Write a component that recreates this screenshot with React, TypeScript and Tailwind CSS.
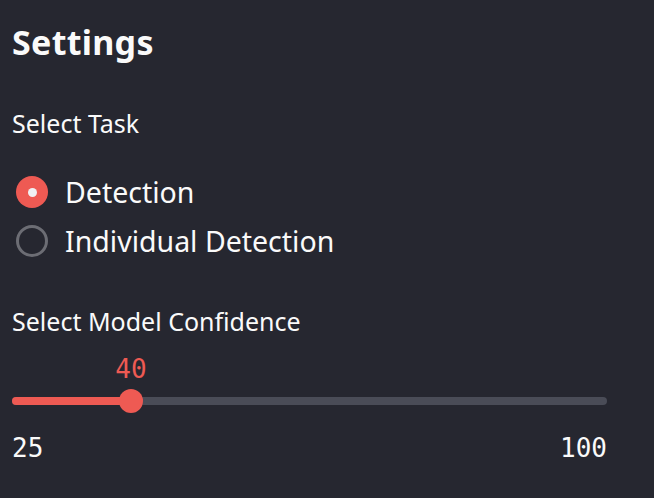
import React from "react";

export default function App() {
  const min = 25;
  const max = 100;
  const value = 40;
  const pct = ((value - min) / (max - min)) * 100;
  return (
    <div className="w-[654px] h-[498px] bg-[#262730] text-[#fafafa] overflow-hidden font-['Noto_Sans',sans-serif]">
      <div className="pl-[12px] pr-[47px] pt-[20px] flex flex-col">
        <h2 className="text-[34px] font-bold leading-[44px] tracking-[0.3px]">Settings</h2>
        <div className="mt-[43px] text-[25px] leading-[32px]">Select Task</div>
        <div className="mt-[37px] flex flex-col gap-[17px]">
          <label className="flex items-center gap-[17px] h-[32px]">
            <span className="w-[32px] h-[32px] ml-[4px] rounded-full bg-[#ee5a53] flex items-center justify-center">
              <span className="w-[9px] h-[9px] rounded-full bg-[#f0f0f2]" />
            </span>
            <span className="text-[28.5px] leading-[32px]">Detection</span>
          </label>
          <label className="flex items-center gap-[17px] h-[32px]">
            <span className="w-[32px] h-[32px] ml-[4px] rounded-full border-[3px] border-[#6c6d74]" />
            <span className="text-[28.5px] leading-[32px]">Individual Detection</span>
          </label>
        </div>
        <div className="mt-[48px] text-[25px] leading-[32px]">Select Model Confidence</div>
        <div className="relative mt-[60px] h-[8px] w-[595px] rounded-full bg-[#4a4c57]">
          <div className="h-full rounded-full bg-[#ee5a53]" style={{ width: `${pct}%` }} />
          <div
            className="absolute top-1/2 w-[24px] h-[24px] -translate-x-1/2 -translate-y-1/2 rounded-full bg-[#ee5a53]"
            style={{ left: `${pct}%` }}
          />
          <div
            className="absolute bottom-[21px] -translate-x-1/2 text-[26px] leading-[30px] text-[#ee5a53] font-['DejaVu_Sans_Mono',monospace]"
            style={{ left: `${pct}%` }}
          >
            {value}
          </div>
        </div>
        <div className="mt-[28px] w-[595px] flex justify-between text-[26px] leading-[30px] font-['DejaVu_Sans_Mono',monospace]">
          <span>{min}</span>
          <span>{max}</span>
        </div>
      </div>
    </div>
  );
}
